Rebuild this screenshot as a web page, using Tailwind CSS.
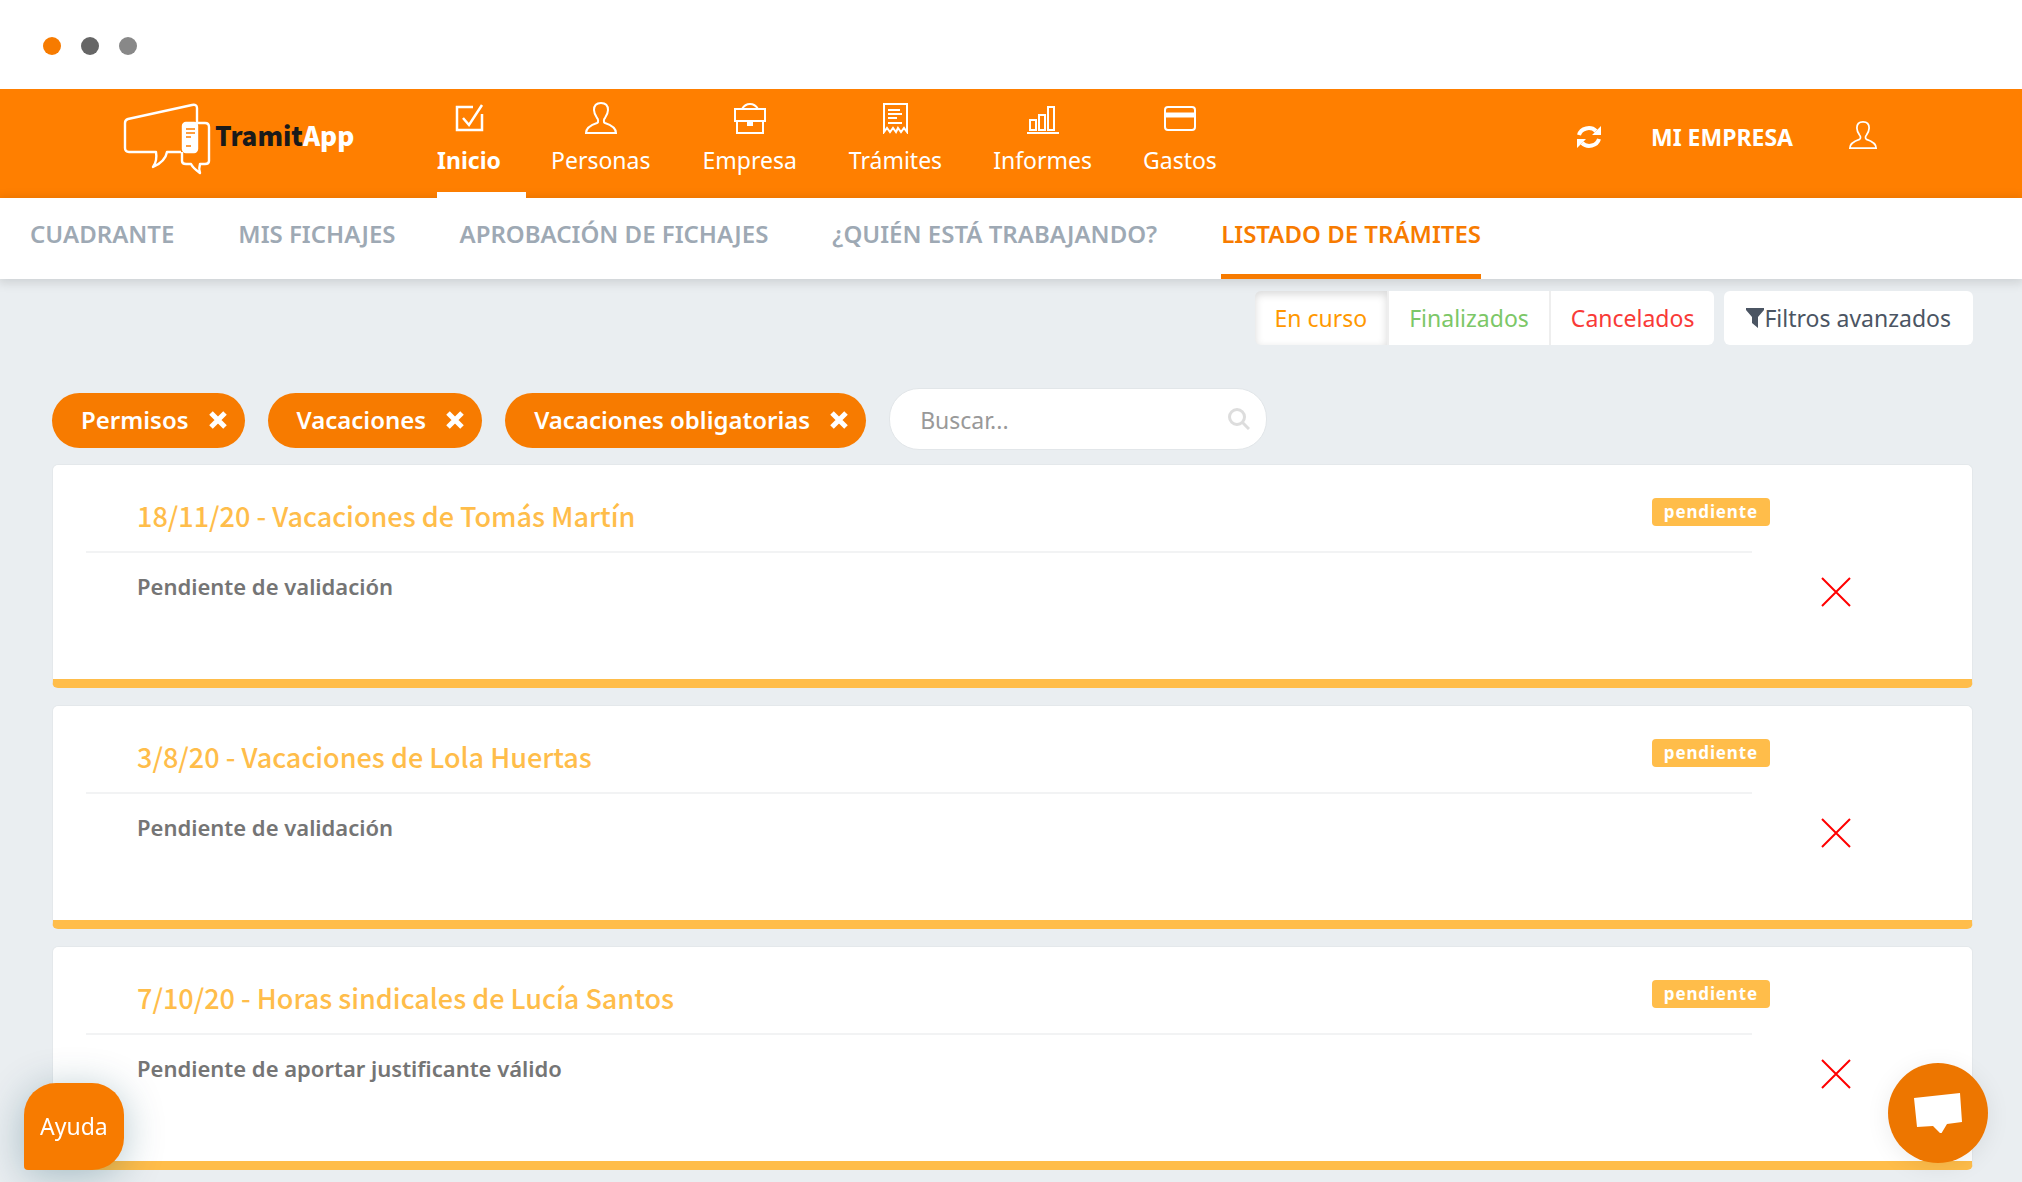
<!DOCTYPE html>
<html lang="es">
<head>
<meta charset="utf-8">
<title>TramitApp</title>
<script src="https://cdn.jsdelivr.net/npm/@tailwindcss/browser@4"></script>
</head>
<body class="min-h-screen bg-[#eaeef1] font-['Noto_Sans',sans-serif] text-2xl text-[#757575]">
<div class="flex h-[89px] items-center gap-5 bg-white px-[43px] pt-0.5">
  <span class="size-[18px] rounded-full bg-[#f77b00]"></span>
  <span class="size-[18px] rounded-full bg-[#666]"></span>
  <span class="size-[18px] rounded-full bg-[#888]"></span>
</div>

<header class="flex h-[109px] bg-[#ff7f00] text-white">
  <a href="#" class="flex w-[412px] items-start pt-3 pl-[122px]" aria-label="TramitApp">
    <svg class="w-[92px] shrink-0" viewBox="0 0 92 74" height="74" fill="none" stroke="#fff" stroke-width="2.4" stroke-linejoin="round">
      <path d="M59 51H45c-1 6-5 11-14 15 3-4 4-9 3-15H7q-4 0-4-4V22q0-3 3-4L70 4q5-1 5 3v16"/>
      <path d="M60 51v9q0 3 4 3h5c2 4 5 6 9 9-1-3-1-6 0-9h5q4 0 4-3V26q0-4-4-4h-8"/>
      <rect x="61" y="22" width="14" height="29" rx="3" fill="#fff"/>
      <path d="M64 28h9M64 32h9M64 36h5M64 45h5" stroke="#ff7f00" stroke-width="1.4"/>
    </svg>
    <span class="pt-4 pl-px font-['Noto_Sans_CJK_SC',sans-serif] text-[26px] leading-9 font-black text-[#1a1a1a]">Tramit<span class="text-white">App</span></span>
  </a>
  <nav class="flex text-[23px] leading-8" aria-label="Principal">
    <a href="#" class="ml-[25px] flex w-[89px] flex-col gap-2.5 border-b-[6px] border-white pt-[13px] font-bold">
      <svg class="ml-4 size-8 shrink-0" viewBox="0 0 32 32" fill="none" stroke="#fff" stroke-width="2.5"><path d="M20 5H4v23h25V12M10 16l6 7L29 3"/></svg>Inicio</a>
    <a href="#" class="flex flex-col items-center gap-2.5 pt-[13px] pr-[26px] pl-[25px]"><svg class="size-8" viewBox="0 0 32 32" fill="none" stroke="#fff" stroke-width="2"><path d="M1 31c0-5 5-8 11-10 2-1 1-4 0-5-2-3-3-5-3-8 0-5 3-7 7-7s7 2 7 7c0 3-1 5-3 8-1 1-2 4 0 5 6 2 11 5 11 10z"/></svg>Personas</a>
    <a href="#" class="flex flex-col items-center gap-2.5 pt-[13px] pr-[26px] pl-[26px]"><svg class="size-8" viewBox="0 0 32 32" fill="none" stroke="#fff" stroke-width="2"><path d="M1 7h30v12H1zM3 19v12h26V19M8 7q3-5 8-5t8 5"/><path d="M13 20h6v4h-6z" fill="#fff" stroke="none"/></svg>Empresa</a>
    <a href="#" class="flex flex-col items-center gap-2.5 pt-[13px] pr-[26px] pl-[26px]"><svg class="size-8" viewBox="0 0 32 32" fill="none" stroke="#fff" stroke-width="2"><path d="M5 30V2h23v28l-3-4-3 4-3-4-2 4-3-4-3 4-3-4zM9 8h12M9 12h14M9 16h9M9 21h14"/></svg>Trámites</a>
    <a href="#" class="flex flex-col items-center gap-2.5 pt-[13px] pr-[26px] pl-[25px]"><svg class="size-8" viewBox="0 0 32 32" fill="none" stroke="#fff" stroke-width="2"><path d="M0 31h32M3 28V18h6v10zM12 28V13h6v15zM21 28V5h6v23z"/></svg>Informes</a>
    <a href="#" class="flex flex-col items-center gap-2.5 pt-[13px] pr-[26px] pl-[25px]"><svg class="size-8" viewBox="0 0 32 32" fill="none" stroke="#fff" stroke-width="2"><rect x="1" y="5" width="30" height="23" rx="3"/><path d="M1 13h30" stroke-width="5"/></svg>Gastos</a>
  </nav>
  <div class="ml-auto flex h-24 items-center pr-[145px]">
    <button type="button" aria-label="Actualizar"><svg class="size-6" viewBox="0 0 24 24" fill="none" stroke="#fff" stroke-width="4"><path d="M2 10a10 9 0 0 1 17-4M22 14a10 9 0 0 1-17 4"/><path d="M24 1v9h-9zM0 23v-9h9z" fill="#fff" stroke="none"/></svg></button>
    <a href="#" class="ml-[50px] text-[23px] font-bold">MI EMPRESA</a>
    <button type="button" class="-mt-1 ml-14" aria-label="Usuario"><svg class="size-7" viewBox="0 0 32 32" fill="none" stroke="#fff" stroke-width="2"><path d="M1 31c0-5 5-8 11-10 2-1 1-4 0-5-2-3-3-5-3-8 0-5 3-7 7-7s7 2 7 7c0 3-1 5-3 8-1 1-2 4 0 5 6 2 11 5 11 10z"/></svg></button>
  </div>
</header>

<nav class="flex h-[81px] gap-16 bg-white px-[30px] font-semibold text-[#9ea9b4] shadow-[0_2px_10px_2px_rgba(0,0,0,0.12)]" aria-label="Secundaria">
  <a href="#" class="pt-5">CUADRANTE</a>
  <a href="#" class="pt-5">MIS FICHAJES</a>
  <a href="#" class="pt-5">APROBACIÓN DE FICHAJES</a>
  <a href="#" class="pt-5">¿QUIÉN ESTÁ TRABAJANDO?</a>
  <a href="#" class="border-b-[5px] border-[#f77b00] pt-5 text-[#f77b00]">LISTADO DE TRÁMITES</a>
</nav>

<main class="pt-3 pr-[49px] pl-[52px]">
  <div class="flex justify-end gap-[10px] text-[23px]">
    <div class="flex h-[54px] divide-x-2 divide-[#eee] overflow-hidden rounded-md bg-white">
      <button type="button" class="px-5 text-[#ff9800] shadow-[inset_0_3px_8px_rgba(0,0,0,0.16)]">En curso</button>
      <button type="button" class="px-5 text-[#7cc767]">Finalizados</button>
      <button type="button" class="px-5 text-[#f93a37]">Cancelados</button>
    </div>
    <button type="button" class="flex h-[54px] items-center rounded-md bg-white px-[22px] text-[#4b5563]"><svg class="h-5 w-[18px]" viewBox="0 0 18 20" fill="currentColor"><path d="M0 0h18v2l-6 7v11l-6-5V9L0 2z"/></svg>Filtros avanzados</button>
  </div>

  <div class="mt-[43px] flex items-center gap-[23px] font-semibold text-white">
    <button type="button" class="mt-0.5 flex h-[55px] items-center gap-5 rounded-full bg-[#f77b00] pr-[18px] pl-[29px]">Permisos<svg class="size-[18px]" viewBox="0 0 18 18" stroke="#fff" stroke-width="5"><path d="M2 2l14 14M16 2L2 16"/></svg></button>
    <button type="button" class="mt-0.5 flex h-[55px] items-center gap-5 rounded-full bg-[#f77b00] pr-[18px] pl-[29px]">Vacaciones<svg class="size-[18px]" viewBox="0 0 18 18" stroke="#fff" stroke-width="5"><path d="M2 2l14 14M16 2L2 16"/></svg></button>
    <button type="button" class="mt-0.5 flex h-[55px] items-center gap-5 rounded-full bg-[#f77b00] pr-[18px] pl-[29px]">Vacaciones obligatorias<svg class="size-[18px]" viewBox="0 0 18 18" stroke="#fff" stroke-width="5"><path d="M2 2l14 14M16 2L2 16"/></svg></button>
    <label class="flex h-[62px] w-[378px] items-center rounded-[30px] border border-[#e2e6e9] bg-white pr-4 pl-[30px]">
      <input type="text" aria-label="Buscar" placeholder="Buscar..." class="min-w-0 flex-1 pt-0.5 text-[23px] font-normal outline-none placeholder:text-[#999]">
      <svg class="size-[22px]" viewBox="0 0 22 22" fill="none" stroke="#ddd" stroke-width="3"><circle cx="9" cy="9" r="7.5"/><path d="M14 14l7 7"/></svg>
    </label>
  </div>

  <div class="mt-[14px] flex flex-col gap-[17px]">
    <article class="flex h-56 rounded-md border border-b-[9px] border-[#e4e8eb] border-b-[#ffbd4a] bg-white">
      <div class="ml-[33px] flex-1">
        <div class="flex justify-between border-b-2 border-[#f2f3f4] pl-[51px]"><h2 class="pt-8 pb-4 font-['Noto_Sans_CJK_SC',sans-serif] text-[27px] leading-[38px] font-medium text-[#ffbd4a]">18/11/20 - Vacaciones de Tomás Martín</h2><span class="mt-[33px] -mr-[18px] h-7 rounded bg-[#ffbd4a] px-3 text-[17px] leading-7 font-bold tracking-wider text-white">pendiente</span></div>
        <p class="pt-[17px] pl-[51px] text-[22px] leading-8 font-semibold">Pendiente de validación</p>
      </div>
      <button type="button" class="mr-[121px] ml-[69px]" aria-label="Cancelar"><svg class="mt-10 size-[30px]" viewBox="0 0 30 30" stroke="red" stroke-width="2"><path d="M1 1l28 28M29 1L1 29"/></svg></button>
    </article>
    <article class="flex h-56 rounded-md border border-b-[9px] border-[#e4e8eb] border-b-[#ffbd4a] bg-white">
      <div class="ml-[33px] flex-1">
        <div class="flex justify-between border-b-2 border-[#f2f3f4] pl-[51px]"><h2 class="pt-8 pb-4 font-['Noto_Sans_CJK_SC',sans-serif] text-[27px] leading-[38px] font-medium text-[#ffbd4a]">3/8/20 - Vacaciones de Lola Huertas</h2><span class="mt-[33px] -mr-[18px] h-7 rounded bg-[#ffbd4a] px-3 text-[17px] leading-7 font-bold tracking-wider text-white">pendiente</span></div>
        <p class="pt-[17px] pl-[51px] text-[22px] leading-8 font-semibold">Pendiente de validación</p>
      </div>
      <button type="button" class="mr-[121px] ml-[69px]" aria-label="Cancelar"><svg class="mt-10 size-[30px]" viewBox="0 0 30 30" stroke="red" stroke-width="2"><path d="M1 1l28 28M29 1L1 29"/></svg></button>
    </article>
    <article class="flex h-56 rounded-md border border-b-[9px] border-[#e4e8eb] border-b-[#ffbd4a] bg-white">
      <div class="ml-[33px] flex-1">
        <div class="flex justify-between border-b-2 border-[#f2f3f4] pl-[51px]"><h2 class="pt-8 pb-4 font-['Noto_Sans_CJK_SC',sans-serif] text-[27px] leading-[38px] font-medium text-[#ffbd4a]">7/10/20 - Horas sindicales de Lucía Santos</h2><span class="mt-[33px] -mr-[18px] h-7 rounded bg-[#ffbd4a] px-3 text-[17px] leading-7 font-bold tracking-wider text-white">pendiente</span></div>
        <p class="pt-[17px] pl-[51px] text-[22px] leading-8 font-semibold">Pendiente de aportar justificante válido</p>
      </div>
      <button type="button" class="mr-[121px] ml-[69px]" aria-label="Cancelar"><svg class="mt-10 size-[30px]" viewBox="0 0 30 30" stroke="red" stroke-width="2"><path d="M1 1l28 28M29 1L1 29"/></svg></button>
    </article>
  </div>
</main>

<button type="button" class="fixed bottom-3 left-6 h-[87px] rounded-[32px] rounded-bl-sm bg-[#f77b00] px-4 text-[23px] text-white shadow-[0_6px_40px_rgba(0,70,90,0.3)]">Ayuda</button>
<button type="button" class="fixed right-[34px] bottom-[19px] flex size-[100px] items-center justify-center rounded-full bg-[#ed7600] shadow-[0_4px_24px_rgba(0,0,0,0.08)]" aria-label="Chat"><svg class="h-10 w-12" viewBox="0 0 48 40" fill="#fff"><path d="M0 5L46 0l2 29-15 2-6 10-8-8-16 1z"/></svg></button>
</body>
</html>
